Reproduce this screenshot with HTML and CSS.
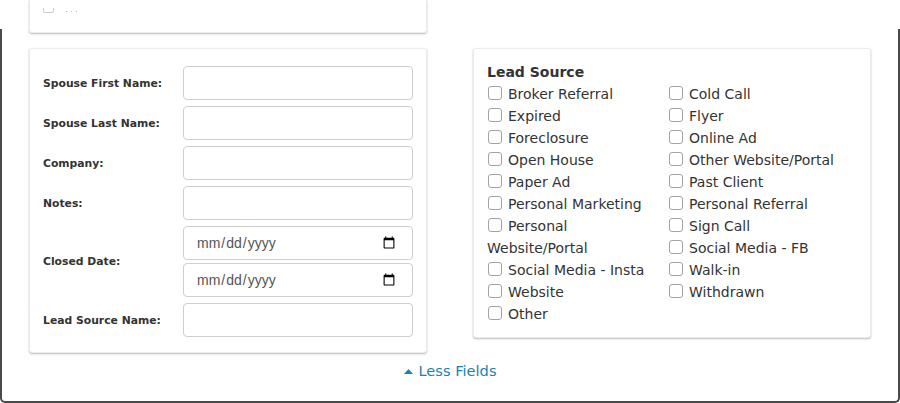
FILE: index.html
```html
<!DOCTYPE html>
<html lang="en">
<head>
<meta charset="utf-8">
<title>Contact – more fields</title>
<link rel="stylesheet" href="styles.css">
</head>
<body>
<div class="frame"></div>
<main class="page">
  <section class="card card-top">
    <div class="clip"><span class="cb-faint"></span><span class="dot"></span><span class="dot"></span><span class="dot"></span></div>
  </section>

  <div class="cards">
    <section class="card card-form">
      <div class="row">
        <label class="lbl">Spouse First Name:</label>
        <input class="field" type="text">
      </div>
      <div class="row">
        <label class="lbl">Spouse Last Name:</label>
        <input class="field" type="text">
      </div>
      <div class="row">
        <label class="lbl">Company:</label>
        <input class="field" type="text">
      </div>
      <div class="row">
        <label class="lbl">Notes:</label>
        <input class="field" type="text">
      </div>
      <div class="row">
        <label class="lbl">Closed Date:</label>
        <div class="stack">
          <input class="field date" type="date">
          <input class="field date" type="date">
        </div>
      </div>
      <div class="row">
        <label class="lbl">Lead Source Name:</label>
        <input class="field" type="text">
      </div>
    </section>

    <section class="card card-src">
      <h3 class="src-title">Lead Source</h3>
      <div class="cols">
        <div class="col col-left">
          <label class="opt"><input type="checkbox">Broker Referral</label>
          <label class="opt"><input type="checkbox">Expired</label>
          <label class="opt"><input type="checkbox">Foreclosure</label>
          <label class="opt"><input type="checkbox">Open House</label>
          <label class="opt"><input type="checkbox">Paper Ad</label>
          <label class="opt"><input type="checkbox">Personal Marketing</label>
          <label class="opt"><input type="checkbox">Personal Website/Portal</label>
          <label class="opt"><input type="checkbox">Social Media - Insta</label>
          <label class="opt"><input type="checkbox">Website</label>
          <label class="opt"><input type="checkbox">Other</label>
        </div>
        <div class="col">
          <label class="opt"><input type="checkbox">Cold Call</label>
          <label class="opt"><input type="checkbox">Flyer</label>
          <label class="opt"><input type="checkbox">Online Ad</label>
          <label class="opt"><input type="checkbox">Other Website/Portal</label>
          <label class="opt"><input type="checkbox">Past Client</label>
          <label class="opt"><input type="checkbox">Personal Referral</label>
          <label class="opt"><input type="checkbox">Sign Call</label>
          <label class="opt"><input type="checkbox">Social Media - FB</label>
          <label class="opt"><input type="checkbox">Walk-in</label>
          <label class="opt"><input type="checkbox">Withdrawn</label>
        </div>
      </div>
    </section>
  </div>

  <div class="more">
    <a class="less" href="#"><svg class="caret" width="9" height="5" viewBox="0 0 9 5"><path d="M0 5 L4.5 0 L9 5 Z" fill="currentColor"/></svg>Less Fields</a>
  </div>
</main>
</body>
</html>
```

FILE: styles.css
```css
html, body {
  margin: 0;
  padding: 0;
  height: 403px;
  overflow: hidden;
  background: #fff;
}

body {
  position: relative;
  font-family: "DejaVu Sans", Verdana, sans-serif;
  color: #333;
}

.frame {
  position: absolute;
  top: 29px;
  left: 0;
  right: 0;
  bottom: 0;
  border: 2px solid #4a4a4a;
  border-top: none;
  border-radius: 0 0 5px 5px;
  pointer-events: none;
}

.page {
  padding: 0 29px;
}

.card {
  background: #fff;
  border: 1px solid #ececec;
  border-radius: 3px;
  box-shadow: 0 1px 2px rgba(0, 0, 0, 0.28);
  box-sizing: border-box;
}

.card-top {
  width: 398px;
  height: 33px;
  border-top: none;
  border-radius: 0 0 3px 3px;
  padding: 8px 0 0 13px;
}

.clip {
  height: 5px;
  overflow: hidden;
  display: flex;
  align-items: flex-end;
  gap: 4px;
  opacity: 0.5;
}

.cb-faint {
  display: inline-block;
  width: 11px;
  height: 11px;
  box-sizing: border-box;
  border: 1px solid #999;
  border-radius: 2px;
  flex: none;
  margin-right: 8px;
}

.dot {
  width: 1px;
  height: 1px;
  background: #777;
  margin-bottom: 1px;
  flex: none;
}

.cards {
  display: flex;
  align-items: flex-start;
  gap: 46px;
  margin-top: 15px;
}

.card-form {
  width: 398px;
  padding: 17px 13px 15px 13px;
  display: flex;
  flex-direction: column;
  gap: 6px;
}

.row {
  display: flex;
  align-items: center;
}

.lbl {
  width: 140px;
  flex: none;
  font-size: 10.8px;
  font-weight: bold;
  color: #333;
}

.field {
  width: 230px;
  height: 34px;
  box-sizing: border-box;
  border: 1px solid #cfcfcf;
  border-radius: 4px;
  padding: 6px 12px;
  margin: 0;
  background: #fff;
  font-family: "Liberation Sans", Arial, sans-serif;
  font-size: 14px;
  color: #555;
  outline: none;
}

.stack {
  display: flex;
  flex-direction: column;
  gap: 3px;
}

.date {
  padding-right: 14px;
}

.card-src {
  width: 398px;
  padding: 12px 14px 12px 13px;
}

.src-title {
  margin: 0;
  font-size: 14px;
  line-height: 22px;
  font-weight: bold;
  color: #333;
}

.cols {
  display: flex;
}

.col {
  display: flex;
  flex-direction: column;
}

.col-left {
  width: 181px;
  flex: none;
}

.opt {
  font-size: 14px;
  line-height: 22px;
  color: #333;
}

.opt input {
  -webkit-appearance: none;
  appearance: none;
  width: 14px;
  height: 14px;
  box-sizing: border-box;
  border: 1px solid #a3a3a3;
  border-radius: 3px;
  margin: 0 6px 0 1px;
  background: #fff;
  vertical-align: -1px;
}

.more {
  margin-top: 8px;
  text-align: center;
  line-height: 20px;
}

.less {
  color: #1a82b6;
  font-size: 14.6px;
  text-decoration: none;
}

.caret {
  vertical-align: 2px;
  margin-right: 6px;
}
```
